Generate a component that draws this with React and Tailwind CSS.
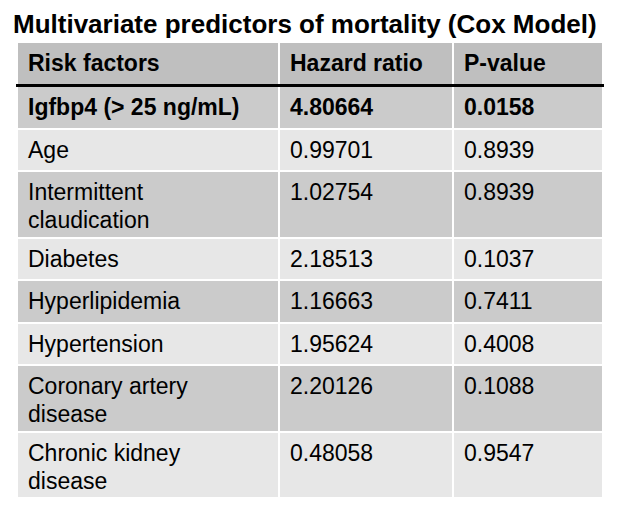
import React from 'react';

const rows = [
    { name: 'Igfbp4 (> 25 ng/mL)', hr: '4.80664', p: '0.0158', bold: true, h: 'h-[40.5px]', dark: true },
    { name: 'Age', hr: '0.99701', p: '0.8939', h: 'h-[40.5px]' },
    { name: ['Intermittent', 'claudication'], hr: '1.02754', p: '0.8939', h: 'h-[64.5px]', dark: true },
    { name: 'Diabetes', hr: '2.18513', p: '0.1037', h: 'h-[40.5px]' },
    { name: 'Hyperlipidemia', hr: '1.16663', p: '0.7411', h: 'h-[40.5px]', dark: true },
    { name: 'Hypertension', hr: '1.95624', p: '0.4008', h: 'h-[40.5px]' },
    { name: ['Coronary artery', 'disease'], hr: '2.20126', p: '0.1088', h: 'h-[64.5px]', dark: true },
    { name: ['Chronic kidney', 'disease'], hr: '0.48058', p: '0.9547', h: 'h-[64.5px]' },
];

function Cell({ children, className }) {
    return <div className={'pl-[10px] pt-[6px] leading-[28px] ' + className}>{children}</div>;
}

export default function App() {
    return (
        <div className="w-[626px] h-[513px] bg-white text-black" style={{ fontFamily: '"Liberation Sans", Arial, sans-serif' }}>
            {/* Title */}
            <div className="pl-[13px] pt-[9px] text-[26px] font-bold leading-[30px]">
                Multivariate predictors of mortality (Cox Model)
            </div>

            <div className="mt-[4px] ml-[18px] w-[584px] text-[23px]">
                {/* Header */}
                <div className="flex gap-[2px] h-[41px] font-bold">
                    <Cell className="w-[260px] bg-[#bfbfbf]">Risk factors</Cell>
                    <Cell className="w-[172px] bg-[#bfbfbf]">Hazard ratio</Cell>
                    <Cell className="flex-1 bg-[#bfbfbf]">P-value</Cell>
                </div>
                <div className="-mx-[2px] h-[3px] bg-black" />

                {/* Body */}
                <div className="flex flex-col gap-[2px]">
                    {rows.map((r, i) => {
                        const bg = r.dark ? 'bg-[#cbcbcb]' : 'bg-[#e7e7e7]';
                        return (
                            <div key={i} className={'flex gap-[2px] ' + r.h + (r.bold ? ' font-bold' : '')}>
                                <Cell className={'w-[260px] ' + bg}>
                                    {Array.isArray(r.name) ? r.name.map((n) => <div key={n}>{n}</div>) : r.name}
                                </Cell>
                                <Cell className={'w-[172px] ' + bg}>{r.hr}</Cell>
                                <Cell className={'flex-1 ' + bg}>{r.p}</Cell>
                            </div>
                        );
                    })}
                </div>
            </div>
        </div>
    );
}
